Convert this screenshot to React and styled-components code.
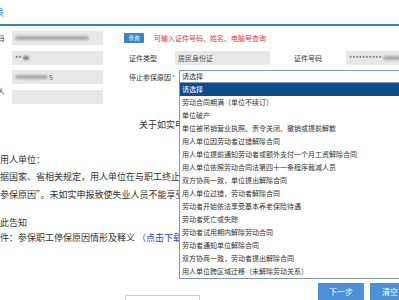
import React from 'react';
import styled, { createGlobalStyle } from 'styled-components';

const GlobalStyle = createGlobalStyle`
  html, body {
    margin: 0;
    padding: 0;
    background: #fff;
  }
  body {
    font-family: "Noto Sans CJK SC", "Noto Sans", sans-serif;
    color: #333;
  }
`;

const Page = styled.div`
  width: 399px;
  height: 300px;
  overflow: hidden;
  background: #fff;
`;

// the form is wider than the window, its left edge is scrolled out of view
const Sheet = styled.div`
  width: 480px;
  margin-left: -40px;
`;

const Header = styled.div`
  height: 24px;
  border-bottom: 2px solid #3a80c6;
  display: flex;
  align-items: center;
`;

const HeaderTitle = styled.div`
  width: 44px;
  text-align: right;
  color: #2f7fc8;
  font-size: 9px;
  line-height: 12px;
  margin-top: 2px;
  white-space: nowrap;
  direction: rtl;
  overflow: hidden;
`;

const Form = styled.div`
  padding-top: 5px;
  display: flex;
  flex-direction: column;
  gap: 5.6px;
`;

const Row = styled.div`
  display: flex;
  align-items: center;
  height: 14px;
`;

const SideLabel = styled.div`
  width: 52px;
  padding-right: 7.5px;
  box-sizing: border-box;
  text-align: right;
  font-size: 7px;
  line-height: 9px;
  white-space: nowrap;
  overflow: hidden;
  margin-top: ${({ $shift }) => $shift || 0}px;
`;

const Field = styled.div`
  width: ${({ $w }) => $w}px;
  height: 14px;
  background: #e8e8e8;
  display: flex;
  align-items: center;
  gap: 1px;
  padding-left: 3px;
  box-sizing: border-box;
  font-size: 7px;
  color: #555;
  overflow: hidden;
  white-space: nowrap;
`;

const Blur = styled.span`
  display: inline-block;
  width: ${({ $w }) => $w}px;
  height: 4px;
  background: ${({ $dark }) => ($dark ? '#777' : '#aaa')};
  filter: blur(1.2px);
  border-radius: 2px;
`;

const SearchButton = styled.button`
  margin-left: 21px;
  width: 20px;
  height: 10px;
  padding: 0;
  border: none;
  border-radius: 1px;
  background: #3a83d0;
  color: #fff;
  font-family: inherit;
  font-size: 5.5px;
  line-height: 10px;
`;

const Hint = styled.span`
  margin-left: 10px;
  color: #e0353a;
  font-size: 7px;
  white-space: nowrap;
`;

const FieldLabel = styled.div`
  width: ${({ $w }) => $w}px;
  padding-left: ${({ $center }) => ($center ? 0 : 26)}px;
  box-sizing: border-box;
  text-align: ${({ $center }) => ($center ? 'center' : 'left')};
  font-size: 7px;
  white-space: nowrap;
`;

const Star = styled.span`
  color: #e0353a;
  margin-left: 1px;
`;

const SelectWrap = styled.div`
  position: relative;
  align-self: flex-start;
  width: 240px;
`;

const SelectBox = styled.div`
  height: 13px;
  border: 1px solid #7d9abd;
  box-sizing: border-box;
  background: #fff;
  font-size: 7px;
  line-height: 11px;
  padding-left: 2px;
`;

const Dropdown = styled.ul`
  position: absolute;
  top: 12px;
  left: 0;
  width: 100%;
  margin: 0;
  padding: 0;
  list-style: none;
  background: #fff;
  border: 1px solid #8196b0;
  box-sizing: border-box;
  z-index: 2;
`;

const Option = styled.li`
  height: 13px;
  line-height: 13px;
  padding-left: 2px;
  font-size: 7px;
  white-space: nowrap;
  color: ${({ $active }) => ($active ? '#fff' : '#333')};
  background: ${({ $active }) => ($active ? '#0e4c90' : 'transparent')};
`;

const Notice = styled.div`
  padding-left: 31px;
  font-size: 9px;
  color: #333;
`;

const Title = styled.div`
  margin-top: 12px;
  line-height: 18px;
  text-align: center;
  white-space: nowrap;
`;

const Line = styled.div`
  line-height: ${({ $lh }) => $lh || 17.5}px;
  margin-top: ${({ $mt }) => $mt || 0}px;
  white-space: nowrap;
`;

const Link = styled.span`
  color: #2a3fd0;
`;

const Footer = styled.div`
  display: flex;
  align-items: flex-start;
  margin-top: 38.5px;
`;

const CodeBox = styled.div`
  margin-left: 165px;
  margin-top: 12px;
  width: 75px;
  height: 14px;
  border: 1px solid #cfcfcf;
  box-sizing: border-box;
`;

const Actions = styled.div`
  display: flex;
  gap: 6px;
  margin-left: 118px;
`;

const ActionButton = styled.button`
  width: ${({ $w }) => $w}px;
  height: 17px;
  padding: 0;
  border: none;
  background: #4a90da;
  color: #fff;
  font-family: inherit;
  font-size: 8px;
`;

const reasons = [
  '请选择',
  '劳动合同期满（单位不续订）',
  '单位破产',
  '单位被吊销营业执照、责令关闭、撤销或提前解散',
  '用人单位因劳动者过错解除合同',
  '用人单位提前通知劳动者或额外支付一个月工资解除合同',
  '用人单位依照劳动合同法第四十一条程序裁减人员',
  '双方协商一致，单位提出解除合同',
  '用人单位过错，劳动者解除合同',
  '劳动者开始依法享受基本养老保险待遇',
  '劳动者死亡或失踪',
  '劳动者试用期内解除劳动合同',
  '劳动者通知单位解除合同',
  '双方协商一致，劳动者提出解除合同',
  '用人单位跨区域迁移（未解除劳动关系）',
];

export default function App() {
  return (
    <Page>
      <GlobalStyle />
      <Sheet>
        <Header>
          <HeaderTitle>停保登记录</HeaderTitle>
        </Header>

        <Form>
          <Row>
            <SideLabel>个人编码</SideLabel>
            <Field $w={91}>
              <Blur $w={74} />
            </Field>
            <SearchButton>查询</SearchButton>
            <Hint>可输入证件号码、姓名、电脑号查询</Hint>
          </Row>

          <Row>
            <SideLabel />
            <Field $w={91}>
              **<Blur $w={6} $dark />
            </Field>
            <FieldLabel $w={72}>证件类型</FieldLabel>
            <Field $w={95}>居民身份证</Field>
            <FieldLabel $w={76} $center>证件号码</FieldLabel>
            <Field $w={80}>
              **********
              <Blur $w={40} />
            </Field>
          </Row>

          <Row>
            <SideLabel />
            <Field $w={91}>
              <Blur $w={33} />5
            </Field>
            <FieldLabel $w={76}>
              停止参保原因<Star>*</Star>
            </FieldLabel>
            <SelectWrap>
              <SelectBox>请选择</SelectBox>
              <Dropdown>
                {reasons.map((r, i) => (
                  <Option key={r} $active={i === 0}>
                    {r}
                  </Option>
                ))}
              </Dropdown>
            </SelectWrap>
          </Row>

          <Row>
            <SideLabel $shift={-11}>经办人</SideLabel>
            <Field $w={91} />
          </Row>
        </Form>

        <Notice>
          <Title>关于如实申报参保职工停保原因的告知</Title>
          <Line $mt={17}>各用人单位：</Line>
          <Line>根据国家、省相关规定，用人单位在与职工终止或解除劳动关系时，应如实申报“停</Line>
          <Line>止参保原因”。未如实申报致使失业人员不能享受失业保险待遇的，由用人单位承担责任。</Line>
          <Line $mt={11.25} $lh={15}>特此告知</Line>
          <Line $lh={15}>
            附件：参保职工停保原因情形及释义 <Link>（点击下载）</Link>
          </Line>
        </Notice>

        <Footer>
          <CodeBox />
          <Actions>
            <ActionButton $w={46}>下一步</ActionButton>
            <ActionButton $w={40}>清空</ActionButton>
          </Actions>
        </Footer>
      </Sheet>
    </Page>
  );
}
